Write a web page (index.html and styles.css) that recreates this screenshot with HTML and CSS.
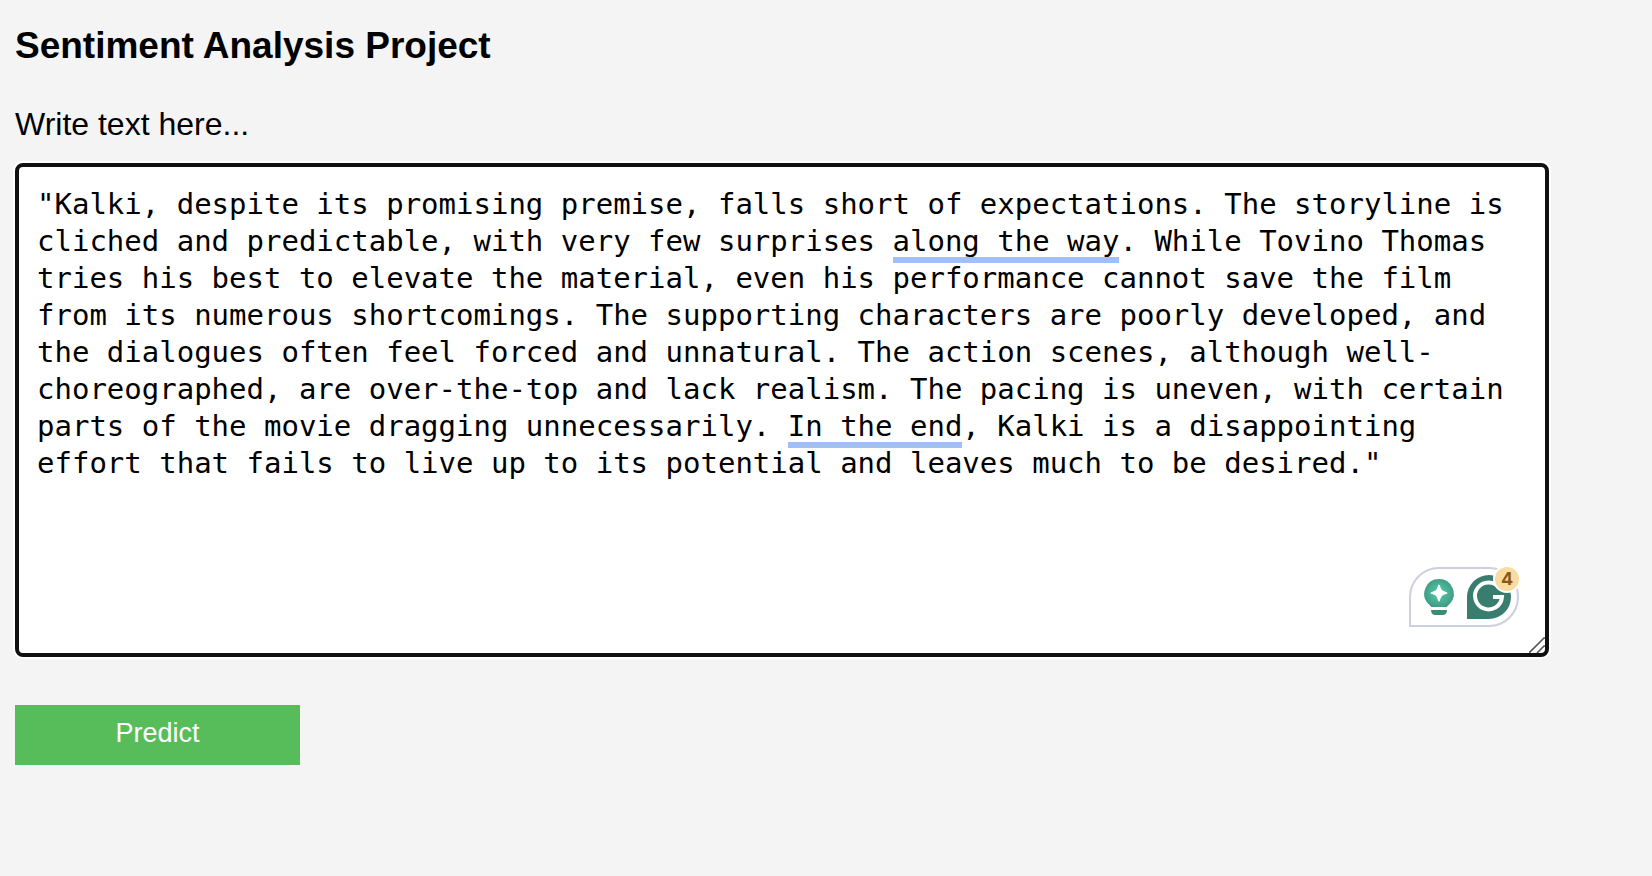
FILE: index.html
```html
<!DOCTYPE html>
<html lang="en">
<head>
<meta charset="utf-8">
<title>Sentiment Analysis Project</title>
<link rel="stylesheet" href="styles.css">
</head>
<body>
<main class="page">
  <h1 class="title">Sentiment Analysis Project</h1>
  <form class="form">
    <label class="label" for="review">Write text here...</label>
    <div class="editor">
      <textarea class="input" id="review" name="review" spellcheck="false">"Kalki, despite its promising premise, falls short of expectations. The storyline is cliched and predictable, with very few surprises along the way. While Tovino Thomas tries his best to elevate the material, even his performance cannot save the film from its numerous shortcomings. The supporting characters are poorly developed, and the dialogues often feel forced and unnatural. The action scenes, although well-choreographed, are over-the-top and lack realism. The pacing is uneven, with certain parts of the movie dragging unnecessarily. In the end, Kalki is a disappointing effort that fails to live up to its potential and leaves much to be desired."</textarea>
      <span class="mark mark-way"></span>
      <span class="mark mark-end"></span>
      <svg class="grip" viewBox="0 0 16 16" aria-hidden="true"><path d="M0 16 15 1h1M8 16 15 9h1" fill="none" stroke="#555" stroke-width="1.6"/></svg>
      <div class="assistant">
        <button class="tool" type="button" aria-label="Suggestions">
          <svg class="bulb" viewBox="0 0 30 36" aria-hidden="true">
            <defs><radialGradient id="glow"><stop offset="0" stop-color="#54c8a8"/><stop offset=".55" stop-color="#4ab598"/><stop offset="1" stop-color="#419d85"/></radialGradient></defs>
            <path d="M15 0a14.700 14.700 0 0 1 10.500 25c-1.500 1.400-2.200 2-2.500 3h-16c-.3-1-1-1.600-2.500-3A14.700 14.700 0 0 1 15 0z" fill="url(#glow)"/>
            <path d="M15 6.500c1.300 5.200 2.300 6.200 7.500 7.500-5.200 1.300-6.200 2.300-7.500 7.500-1.300-5.200-2.300-6.200-7.500-7.500 5.200-1.300 6.200-2.300 7.500-7.500z" fill="#fff" stroke="#fff" stroke-width="1.800" stroke-linejoin="round"/>
            <path d="M7 31h16c0 3-1.500 5-4.500 5h-7C8.500 36 7 34 7 31z" fill="#3b8b75"/>
          </svg>
        </button>
        <button class="tool" type="button" aria-label="Grammar check">
          <svg class="drop" viewBox="0 0 44 44" aria-hidden="true">
            <path d="M22 0a22 22 0 0 1 0 44H0V22A22 22 0 0 1 22 0z" fill="#387d6e"/>
            <path d="M32.500 13A13.500 13.500 0 1 0 35 22H26" fill="none" stroke="#fff" stroke-width="4"/>
          </svg>
        </button>
        <span class="badge">4</span>
      </div>
    </div>
    <button class="submit" type="submit">Predict</button>
  </form>
</main>
</body>
</html>
```
FILE: styles.css
```css
* {
  box-sizing: border-box;
}

body {
  margin: 0;
  background: #f4f4f4;
  color: #000;
  font-family: "Liberation Sans", Arial, sans-serif;
}

.page {
  padding: 24px 103px 24px 15px;
}

.title {
  margin: 0 0 34px;
  font-size: 37px;
  line-height: 44px;
}

.form {
  display: flex;
  flex-direction: column;
  align-items: flex-start;
}

.label {
  margin-bottom: 17px;
  font-size: 32px;
  line-height: 44px;
}

.editor {
  position: relative;
  width: 100%;
  margin-bottom: 48px;
  font-family: "DejaVu Sans Mono", monospace;
  font-size: 29px;
  line-height: 37px;
}

.input {
  display: block;
  width: 100%;
  height: 494px;
  padding: 19px 18px;
  border: 4px solid #101010;
  border-radius: 8px;
  outline: none;
  box-shadow: 0 0 0 2px #fff;
  background: #fff;
  color: #000;
  font: inherit;
  resize: none;
}

.mark {
  position: absolute;
  height: 6px;
  background: #a0bffa;
}

.mark-way {
  top: 94px;
  left: calc(22px + 49ch);
  width: 13ch;
}

.mark-end {
  top: 279px;
  left: calc(22px + 43ch);
  width: 10ch;
}

.grip {
  position: absolute;
  right: 4px;
  bottom: 4px;
  width: 16px;
  height: 16px;
}

.assistant {
  position: absolute;
  right: 30px;
  bottom: 30px;
  display: flex;
  align-items: center;
  gap: 13px;
  width: 110px;
  height: 60px;
  padding: 0 6px 0 13px;
  border: 2px solid #cdcfdf;
  border-radius: 30px 30px 30px 0;
  background: #fff;
}

.tool {
  display: block;
  padding: 0;
  border: 0;
  background: none;
}

.bulb {
  display: block;
  width: 30px;
  height: 36px;
}

.drop {
  display: block;
  width: 44px;
  height: 44px;
}

.badge {
  position: absolute;
  top: -4px;
  right: -4px;
  width: 28px;
  height: 28px;
  border: 2px solid #fff;
  border-radius: 50%;
  background: #f9dca0;
  color: #8a5a14;
  font-family: Inter, sans-serif;
  font-size: 18px;
  font-weight: 700;
  line-height: 24px;
  text-align: center;
}

.submit {
  width: 285px;
  height: 60px;
  padding: 0 0 3px;
  border: 0;
  background: #57bd5b;
  color: #fff;
  font-family: inherit;
  font-size: 27px;
}
```
